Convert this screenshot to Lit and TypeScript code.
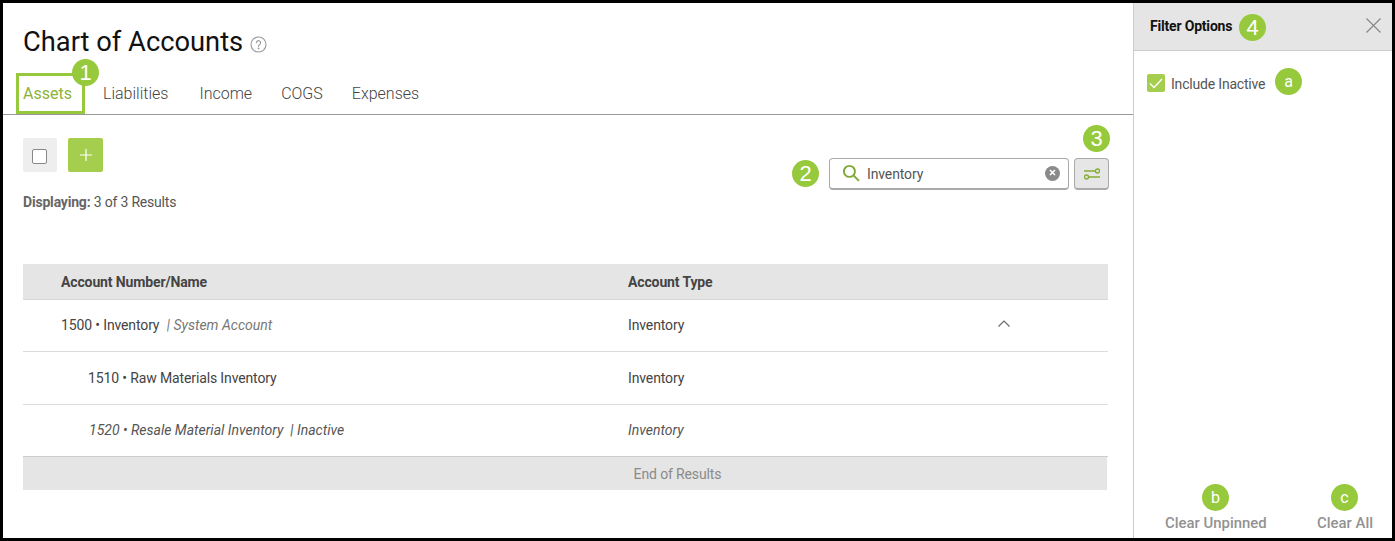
import { LitElement, html, css } from "lit";
import { customElement } from "lit/decorators.js";

const badge = (t: string, cls: string) => html`<span class="badge ${cls}">${t}</span>`;

@customElement("app-root")
export class AppRoot extends LitElement {
  static styles = css`
    :host { display: block; width: 1395px; height: 541px; box-sizing: border-box; border: 3px solid #000; background: #fff; font-family: Roboto, "Liberation Sans", sans-serif; color: #444; font-size: 14px; letter-spacing: -0.13px; position: relative; overflow: hidden; }
    .page { display: flex; height: 535px; }
    .main { width: 1130px; flex: none; display: flex; flex-direction: column; }
    .titleRow { display: flex; align-items: center; gap: 7px; padding: 21px 0 0 20px; height: 37px; }
    h1 { margin: 0; font-size: 27.3px; font-weight: 400; color: #111; line-height: 37px; letter-spacing: 0; }
    .help { margin-top: 4px; display: block; }
    .tabs { display: flex; margin-top: 13px; height: 40px; border-bottom: 1px solid #999; padding-left: 13px; letter-spacing: 0; }
    .tab { font-size: 16px; font-weight: 300; color: #444; padding: 10px 0 0; line-height: 19px; margin-right: 29px; box-sizing: border-box; }
    .tab.first { width: 69px; height: 41px; margin-top: -1px; border: 3px solid #97c93d; color: #8cb33a; font-weight: 400; padding: 8px 0 0 4px; margin-right: 18px; }
    .tab.l2 { margin-right: 31px; }
    .badge { position: absolute; width: 27px; height: 27px; border-radius: 50%; background: #97c93d; color: #fff; display: flex; align-items: center; justify-content: center; font-size: 22px; font-family: "Liberation Sans", Arial, sans-serif; line-height: 1; letter-spacing: 0; }
    .badge.small { font-size: 16px; font-family: Roboto, sans-serif; }
    .b1 { left: 69px; top: 56px; }
    .b2 { left: 789px; top: 157px; }
    .b3 { left: 1080px; top: 122px; }
    .b4 { left: 1236px; top: 11px; }
    .ba { left: 1272px; top: 65px; }
    .bb { left: 1199px; top: 481px; }
    .bc { left: 1328px; top: 481px; }
    .toolbar { display: flex; justify-content: space-between; padding: 23px 24px 0 20px; height: 149px; box-sizing: border-box; flex: none; }
    .left { display: flex; flex-direction: column; }
    .btns { display: flex; gap: 11px; }
    .selBtn { width: 34px; height: 34px; background: #eee; border-radius: 2px; display: flex; align-items: center; justify-content: center; }
    .box { width: 15px; height: 15px; box-sizing: border-box; margin: 2px 1px 0 0; border: 1px solid #888; border-radius: 2px; background: #fff; }
    .addBtn { width: 35px; height: 34px; background: #a5ce4e; border-radius: 2px; display: flex; align-items: center; justify-content: center; }
    .disp { margin-top: 21px; letter-spacing: -0.19px; color: #555; line-height: 18px; }
    .disp b { font-weight: 700; color: #666; }
    .right { display: flex; gap: 5px; padding-top: 20px; align-items: flex-start; }
    .search { width: 240px; height: 32px; box-sizing: border-box; border: 1px solid #aaa; border-bottom-width: 2px; border-radius: 4px; display: flex; align-items: center; padding: 0 8px 0 12px; color: #555; }
    .search svg { margin-top: -2px; }
    .search span { flex: 1; margin-left: 7px; }
    .clear { width: 15px; height: 15px; border-radius: 50%; background: #8a8a8a; display: flex; align-items: center; justify-content: center; }
    .fbtn { width: 35px; height: 32px; box-sizing: border-box; background: #e6e6e6; border: 1px solid #aaa; border-bottom-width: 2px; border-radius: 4px; display: flex; align-items: center; justify-content: center; }
    .table { margin: 0 25px 0 20px; }
    .row { display: grid; grid-template-columns: 567px 1fr 29px 81px; align-items: center; border-bottom: 1px solid #dcdcdc; color: #444; padding-left: 38px; box-sizing: border-box; }
    .head { height: 36px; background: #e5e5e5; font-weight: 700; border-bottom-color: #d8d8d8; }
    .r1 { height: 52px; padding-bottom: 2px; }
    .r1 svg { display: block; margin-top: -2px; }
    .r2 { height: 53px; }
    .r3 { height: 52px; padding-bottom: 2px; font-style: italic; color: #555; letter-spacing: 0; border-bottom-color: #ccc; }
    .indent { padding-left: 27px; }
    .r3 .indent { padding-left: 28px; }
    .muted { color: #777; font-style: italic; letter-spacing: 0; margin-left: 4px; }
    .end { height: 33px; margin-right: 1px; padding-left: 225px; background: #e5e5e5; color: #8a8a8a; display: flex; align-items: center; justify-content: center; }
    .panel { flex: 1; border-left: 1px solid #ccc; display: flex; flex-direction: column; }
    .phead { height: 48px; flex: none; box-sizing: border-box; background: #e5e5e5; border-bottom: 1px solid #ccc; display: flex; align-items: center; justify-content: space-between; padding: 0 11px 2px 16px; font-weight: 700; color: #111; letter-spacing: -0.19px; }
    .phead svg { margin-top: -1px; }
    .pbody { flex: 1; padding: 23px 13px; }
    .check { display: flex; align-items: center; gap: 6px; letter-spacing: -0.19px; color: #555; height: 18px; }
    .check span { margin-top: 2px; }
    .cb { width: 18px; height: 18px; border-radius: 2px; background: #a5ce4e; display: flex; align-items: center; justify-content: center; }
    .pfoot { display: flex; justify-content: space-between; padding: 0 19px 6px 31px; font-size: 14.9px; font-weight: 500; color: #929292; line-height: 18px; letter-spacing: 0; }
  `;

  render() {
    return html`
      <div class="page">
        <div class="main">
          <div class="titleRow">
            <h1>Chart of Accounts</h1>
            <svg class="help" width="17" height="17" viewBox="0 0 17 17" fill="none" stroke="#999" stroke-width="1.1">
              <circle cx="8.5" cy="8.5" r="7.5"></circle>
              <path d="M6.4 6.8a2.1 2.1 0 1 1 3.3 1.7c-.8.5-1.2.9-1.2 1.8" stroke-linecap="round"></path>
              <circle cx="8.5" cy="12.4" r=".4" fill="#999"></circle>
            </svg>
          </div>
          <div class="tabs">
            <div class="tab first">Assets</div>
            <div class="tab l2">Liabilities</div>
            <div class="tab">Income</div>
            <div class="tab">COGS</div>
            <div class="tab">Expenses</div>
          </div>
          <div class="toolbar">
            <div class="left">
              <div class="btns">
                <div class="selBtn"><div class="box"></div></div>
                <div class="addBtn">
                  <svg width="12" height="12" viewBox="0 0 12 12" stroke="#fff" stroke-width="1.2"><path d="M6 0v12M0 6h12"></path></svg>
                </div>
              </div>
              <div class="disp"><b>Displaying:</b> 3 of 3 Results</div>
            </div>
            <div class="right">
              <div class="search">
                <svg width="18" height="18" viewBox="0 0 17 17" fill="none" stroke="#7fa834" stroke-width="1.8"><circle cx="7" cy="7" r="5.2"></circle><path d="M10.8 10.8l5.2 5.2"></path></svg>
                <span>Inventory</span>
                <div class="clear"><svg width="7" height="7" viewBox="0 0 7 7" stroke="#fff" stroke-width="1.6"><path d="M1 1l5 5M6 1l-5 5"></path></svg></div>
              </div>
              <div class="fbtn">
                <svg width="16" height="12" viewBox="0 0 16 12" fill="none" stroke="#86ad36" stroke-width="1.4">
                  <path d="M0 3h11.500M4.500 9H16"></path>
                  <circle cx="13.500" cy="3" r="2"></circle>
                  <circle cx="2.500" cy="9" r="2"></circle>
                </svg>
              </div>
            </div>
          </div>
          <div class="table">
            <div class="row head"><div>Account Number/Name</div><div>Account Type</div><div></div><div></div></div>
            <div class="row r1">
              <div>1500 • Inventory <span class="muted">| System Account</span></div>
              <div>Inventory</div>
              <div>
                <svg width="12" height="7" viewBox="0 0 12 7" fill="none" stroke="#666" stroke-width="1.1"><path d="M.5 6.500L6 1l5.500 5.500"></path></svg>
              </div>
              <div></div>
            </div>
            <div class="row r2">
              <div class="indent">1510 • Raw Materials Inventory</div>
              <div>Inventory</div><div></div><div></div>
            </div>
            <div class="row r3">
              <div class="indent">1520 • Resale Material Inventory &nbsp;| Inactive</div>
              <div>Inventory</div><div></div><div></div>
            </div>
            <div class="end">End of Results</div>
          </div>
        </div>
        <div class="panel">
          <div class="phead">
            <span>Filter Options</span>
            <svg width="15" height="15" viewBox="0 0 16 16" stroke="#888" stroke-width="1.3"><path d="M.5.5l15 15M15.500.5l-15 15"></path></svg>
          </div>
          <div class="pbody">
            <div class="check">
              <div class="cb"><svg width="14" height="11" viewBox="0 0 14 11" fill="none" stroke="#fff" stroke-width="1.4"><path d="M1 5.500l4 4L13 1"></path></svg></div>
              <span>Include Inactive</span>
            </div>
          </div>
          <div class="pfoot"><span>Clear Unpinned</span><span>Clear All</span></div>
        </div>
      </div>
      ${badge("1", "b1")}${badge("2", "b2")}${badge("3", "b3")}${badge("4", "b4")}
      ${badge("a", "ba small")}${badge("b", "bb small")}${badge("c", "bc small")}
    `;
  }
}
